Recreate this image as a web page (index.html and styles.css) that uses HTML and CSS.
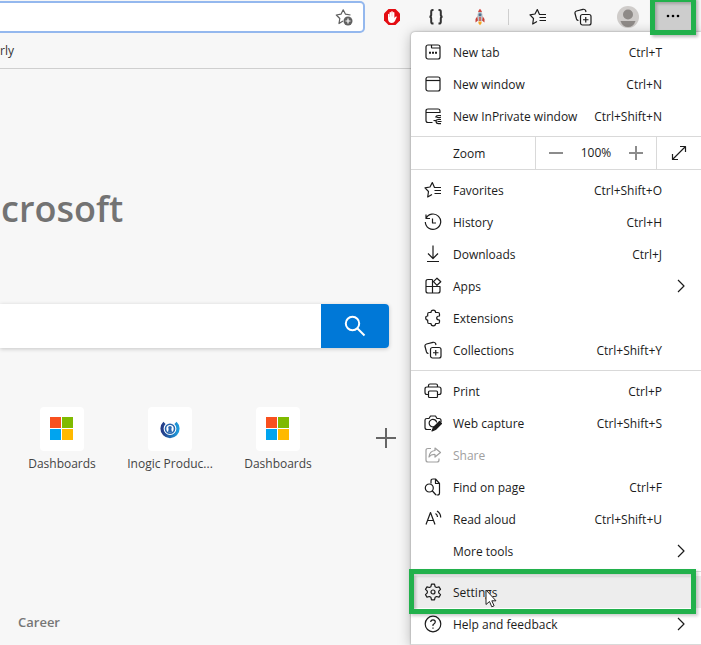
FILE: index.html
```html
<!DOCTYPE html>
<html lang="en">
<head>
<meta charset="utf-8">
<title>New tab</title>
<link rel="stylesheet" href="styles.css">
</head>
<body>
<svg class="defs" aria-hidden="true">
  <symbol id="favorites" viewBox="0 0 18 18"><path d="M13 6.500H10.500L8.300 1.500 6 6 1 6.800 4.500 10.500 3.700 16 8 13.500M11.500 6.500H17M10.500 9.500H17M10.500 12.500H17"/></symbol>
  <symbol id="collections" viewBox="0 0 18 18"><rect x="6.500" y="6.500" width="10.500" height="10.500" rx="2"/><path d="M11.750 9v5.500M9 11.750h5.500M4.500 12.500Q3 12.500 2.500 11L1 5.500Q.6 3.600 2.500 3L9 1.300Q11 1 11.600 2.500L12 4"/></symbol>
  <symbol id="chevron" viewBox="0 0 18 18"><path d="M6 3l6 6-6 6"/></symbol>
  <symbol id="windows" viewBox="0 0 23 23"><path class="red" d="M0 0h11v11H0z"/><path class="green" d="M12 0h11v11H12z"/><path class="blue" d="M0 12h11v11H0z"/><path class="yellow" d="M12 12h11v11H12z"/></symbol>
</svg>

<header class="toolbar">
  <div class="address">
    <input type="text" aria-label="Address">
    <button class="star" aria-label="Add to favorites"><svg class="icon" viewBox="0 0 18 18"><path d="M8 13L4 15.500 4.800 10.500 1.300 7 6 6.200 8.200 1.800 10.500 6.200 15.500 7"/><circle class="badge" cx="13" cy="13" r="4.500"/><path class="badge-plus" d="M13 10.500v5M10.500 13h5"/></svg></button>
  </div>
  <nav class="tools" aria-label="Browser tools">
    <button aria-label="Ad blocker"><svg class="solid" viewBox="0 0 18 18"><path fill="#e40d13" d="M5.500 1h7L17 5.500v7L12.500 17h-7L1 12.500v-7z"/><path fill="#fff" d="M5 6.200q.7-.7 1.300 0V9h.2V4.500q.8-.9 1.600 0V8.500h.1V3.600q.8-.8 1.600 0V8.500h.1V4.500q.8-.8 1.500 0V10l1-1.200q.8-.8 1.500 0L12 13q-1 2-3.200 2Q5.300 15 5 11z"/></svg></button>
    <button aria-label="JSON viewer"><svg class="braces" viewBox="0 0 18 18"><path d="M6.500 2H5.700Q4.200 2 4.200 3.800V6.800Q4.200 8.600 2.500 8.700 4.200 8.800 4.200 10.600V13.700Q4.200 15.500 5.700 15.500H6.500M11.500 2h.8Q13.800 2 13.800 3.800V6.800Q13.800 8.600 15.500 8.700 13.800 8.800 13.800 10.600V13.700Q13.800 15.500 12.300 15.500H11.500"/></svg></button>
    <button aria-label="Rocket"><svg class="solid" viewBox="0 0 18 18"><path fill="#c94138" d="M6.500 8L4.500 11v3.500L7 12.500zM11.500 8l2 3v3.500L11 12.500z"/><path fill="#b9c2c9" d="M9 2Q12 5 11.500 9L11 13H7L6.500 9Q6 5 9 2z"/><path fill="#d14a42" d="M9 .8Q10.400 2.200 11 4H7Q7.600 2.200 9 .8zM8.300 9h1.400v4H8.300z"/><circle fill="#4d6f8e" cx="9" cy="6.800" r="1.500"/><path fill="#f6a623" d="M7.300 13.500h3.400Q11 15.500 9 17.300 7 15.500 7.300 13.500z"/></svg></button>
    <span class="divider"></span>
    <button aria-label="Favorites"><svg class="icon"><use href="#favorites"/></svg></button>
    <button aria-label="Collections"><svg class="icon"><use href="#collections"/></svg></button>
    <button aria-label="Profile"><svg class="avatar" viewBox="0 0 22 22"><circle fill="#cfccca" cx="11" cy="11" r="11"/><circle fill="#8e8a87" cx="11" cy="8.500" r="5"/><path fill="#8e8a87" d="M3.500 15h15Q16.500 21 11 21T3.500 15z"/></svg></button>
    <button class="more" aria-label="Settings and more"><svg class="dots" viewBox="0 0 18 18"><circle cx="4" cy="9" r="1.300"/><circle cx="9" cy="9" r="1.300"/><circle cx="14" cy="9" r="1.300"/></svg></button>
  </nav>
</header>
<div class="bookmarks"><a href="#">rly</a></div>

<main class="page">
  <h1 class="brand">crosoft</h1>
  <form class="search">
    <input type="text" aria-label="Search the web">
    <button type="button" aria-label="Search"><svg viewBox="0 0 22 22"><circle cx="8.500" cy="8.500" r="6.700"/><path d="M13.500 13.500L20.500 20.500"/></svg></button>
  </form>
  <div class="tiles">
    <a class="tile" href="#"><span class="thumb"><svg class="win"><use href="#windows"/></svg></span>Dashboards</a>
    <a class="tile" href="#"><span class="thumb"><svg class="inogic" viewBox="0 0 20 20"><defs><linearGradient id="ring"><stop offset="0" stop-color="#243a86"/><stop offset="1" stop-color="#1e9bdc"/></linearGradient></defs><path fill="none" stroke="url(#ring)" stroke-width="3.200" d="M4.500 3.800A8 8 0 1 0 15.500 3.800"/><circle fill="#fff" stroke="#2765ae" stroke-width="1.600" cx="10" cy="9.700" r="4.500"/><circle fill="#2b67b0" cx="10" cy="8.800" r="1.800"/><path fill="#2b67b0" d="M8.700 10h2.600l.8 3.500H7.900z"/></svg></span>Inogic Produc...</a>
    <a class="tile" href="#"><span class="thumb"><svg class="win"><use href="#windows"/></svg></span>Dashboards</a>
    <button class="add" aria-label="Add site"><svg viewBox="0 0 20 20"><path d="M10 0v20M0 10h20"/></svg></button>
  </div>
  <h2 class="topic">Career</h2>
</main>

<div class="menu" role="menu">
  <div class="group">
    <button class="item" role="menuitem"><svg class="icon" viewBox="0 0 18 18"><rect x="2" y="2" width="14" height="14" rx="2"/><path d="M7.500 2v2.500q0 .5.500.500H16"/><path class="dotted" d="M5 9.800h2M8 9.800h2M11 9.800h2"/></svg><span>New tab</span><kbd>Ctrl+T</kbd></button>
    <button class="item" role="menuitem"><svg class="icon" viewBox="0 0 18 18"><rect x="2" y="2" width="14" height="14" rx="2"/><path d="M2 5.500h14"/></svg><span>New window</span><kbd>Ctrl+N</kbd></button>
    <button class="item" role="menuitem"><svg class="icon" viewBox="0 0 18 18"><path d="M8.500 15.500H4q-2 0-2-2V4q0-2 2-2h10q2 0 2 2v2M2 5.500h14M17 8.500h-2.500q-2.500 0-3 1.800M12 9.800q3 1.700 4.800.2M17 12.500h-2.500q-1.500 0-2.500 1M9.500 13.500l2.500.2q0 3 2.500 3H17M13.500 14.500h4"/></svg><span>New InPrivate window</span><kbd>Ctrl+Shift+N</kbd></button>
  </div>
  <div class="zoom">
    <span class="zoom-label">Zoom</span>
    <button aria-label="Zoom out"><svg class="sign" viewBox="0 0 14 14"><path d="M0 7h14"/></svg></button>
    <output>100%</output>
    <button aria-label="Zoom in"><svg class="sign" viewBox="0 0 14 14"><path d="M0 7h14M7 0v14"/></svg></button>
    <button class="full" aria-label="Full screen"><svg class="icon" viewBox="0 0 18 18"><path d="M2.500 15.500l13-13M10 2.500h5.500V8M2.500 10v5.500H8"/></svg></button>
  </div>
  <div class="group">
    <button class="item" role="menuitem"><svg class="icon"><use href="#favorites"/></svg><span>Favorites</span><kbd>Ctrl+Shift+O</kbd></button>
    <button class="item" role="menuitem"><svg class="icon" viewBox="0 0 18 18"><path d="M2 1.500v4h4M2 5.500A7.700 7.700 0 1 1 1.300 9M8.500 5.500V10H12"/></svg><span>History</span><kbd>Ctrl+H</kbd></button>
    <button class="item" role="menuitem"><svg class="icon" viewBox="0 0 18 18"><path d="M9 .5V13.500M4 8.500l5 5 5-5M3 16.500h12"/></svg><span>Downloads</span><kbd>Ctrl+J</kbd></button>
    <button class="item" role="menuitem"><svg class="icon" viewBox="0 0 18 18"><path d="M8.500 2.500H4q-2 0-2 2V14q0 2 2 2h10q2 0 2-2V9.500h-14M8.500 2.500V16M13 1.200L16.800 4.700 13 8.300 9.500 4.700z"/></svg><span>Apps</span><svg class="icon chevron"><use href="#chevron"/></svg></button>
    <button class="item" role="menuitem"><svg class="icon" viewBox="0 0 18 18"><path d="M5 3.500H7Q7 1.200 9.300 1.200T11.600 3.500H14q1.500 0 1.500 1.500V7Q12.700 7 12.700 9t2.800 2v2q0 1.500-1.500 1.500H11.600Q11.600 16.800 9.300 16.800T7 14.500H5q-1.300 0-1.300-1.500V11Q1.700 11 1.700 9T3.700 7V5q0-1.500 1.300-1.500z"/></svg><span>Extensions</span></button>
    <button class="item" role="menuitem"><svg class="icon"><use href="#collections"/></svg><span>Collections</span><kbd>Ctrl+Shift+Y</kbd></button>
  </div>
  <div class="group">
    <button class="item" role="menuitem"><svg class="icon" viewBox="0 0 18 18"><path d="M4.500 12.500H3q-2 0-2-2V7q0-2 2-2h12q2 0 2 2v3.500q0 2-2 2h-1.500M4.500 5V3.500q0-1.500 1.500-1.500h6q1.500 0 1.500 1.500V5"/><rect x="4.500" y="9" width="9" height="6.500" rx="1"/></svg><span>Print</span><kbd>Ctrl+P</kbd></button>
    <button class="item" role="menuitem"><svg class="icon" viewBox="0 0 18 18"><path d="M7 15.500H3q-2 0-2-2V6q0-1.500 2-1.500H5L6.500 2h5L13 4.500h2q2 0 2 2V8M11 12.300A3.800 3.800 0 1 1 12.700 8.500"/><path class="pen" d="M8 17l1.500-3.500L15.500 7.500 17.500 9.500 11.500 15.500z"/></svg><span>Web capture</span><kbd>Ctrl+Shift+S</kbd></button>
    <button class="item" role="menuitem" disabled><svg class="icon" viewBox="0 0 18 18"><path d="M7 2.500H4q-2 0-2 2V14q0 2 2 2h9q2 0 2-2V12.500M11 2l5.500 4.500L11 11V8.500q-4-.3-6 2.500.5-6 6-6.500z"/></svg><span>Share</span></button>
    <button class="item" role="menuitem"><svg class="icon" viewBox="0 0 18 18"><path d="M7 5.500V3q0-2 2-2h2.500l4 4.500V15q0 2-2 2h-1M11.500 1v4.500h4M8 12.500l4 4.500"/><circle cx="5.300" cy="10" r="4"/></svg><span>Find on page</span><kbd>Ctrl+F</kbd></button>
    <button class="item" role="menuitem"><svg class="icon" viewBox="0 0 18 18"><path d="M2 14.500L6.500 2.500 11 14.500M3.500 10.500h6M11.500 3.500q2 1.300 2 3.500M13 1Q16.700 3.300 16.700 7.500"/></svg><span>Read aloud</span><kbd>Ctrl+Shift+U</kbd></button>
    <button class="item" role="menuitem"><span class="icon"></span><span>More tools</span><svg class="icon chevron"><use href="#chevron"/></svg></button>
  </div>
  <div class="group">
    <button class="item current" role="menuitem"><svg class="icon" viewBox="0 0 18 18"><circle cx="9" cy="9" r="2"/><path d="M7.500 1.200h3L11.100 3.700 12.600 4.500 15 3.800 16.500 6.400 14.700 8.100V9.900L16.500 11.600 15 14.200 12.600 13.500 11.100 14.300 10.500 16.800H7.500L6.900 14.300 5.400 13.500 3 14.200 1.500 11.600 3.300 9.900V8.100L1.500 6.400 3 3.800 5.400 4.500 6.900 3.700z"/></svg><span>Settings</span>
      <svg class="pointer" viewBox="0 0 12 19"><path d="M1 1v14.500l3.500-3 2.300 5.300 2.300-1-2.300-5H11z"/></svg></button>
    <button class="item" role="menuitem"><svg class="icon" viewBox="0 0 18 18"><circle cx="9" cy="9" r="7.800"/><path d="M6.700 7Q6.700 4.800 9 4.800T11.300 7Q11.300 8.200 9 9.800V11M9 12.500v1.300"/></svg><span>Help and feedback</span><svg class="icon chevron"><use href="#chevron"/></svg></button>
  </div>
</div>
</body>
</html>
```
FILE: styles.css
```css
* { box-sizing: border-box; }
body {
  position: relative;
  margin: 0;
  min-height: 100vh;
  overflow: hidden;
  background: #f7f7f7;
  color: #1b1b1b;
  font: 12px/16px "Open Sans", "Noto Sans", sans-serif;
}
button { padding: 0; border: 0; background: none; color: inherit; font: inherit; }
input { min-width: 0; border: 0; outline: 0; background: none; font: inherit; }
a { color: inherit; text-decoration: none; }
svg { display: block; flex: none; }
.defs { position: absolute; width: 0; height: 0; }
.icon { width: 18px; height: 18px; fill: none; stroke: currentColor; stroke-width: 1.2; stroke-linejoin: round; }
.solid, .braces, .dots { width: 18px; height: 18px; }

.toolbar { display: flex; height: 34px; }
.address {
  display: flex;
  flex: 1;
  align-items: center;
  height: 32px;
  margin-top: 1px;
  padding-right: 10px;
  background: #fff;
  border: 2px solid #94b8ee;
  border-left: 0;
  border-radius: 0 5px 5px 0;
}
.address input { flex: 1; }
.star { color: #5f5f5f; }
.badge { fill: #616161; stroke: none; }
.badge-plus { stroke: #fff; }
.tools { display: flex; align-items: center; padding: 0 5px; }
.tools button { display: grid; place-items: center; width: 45px; height: 34px; }
.tools button:nth-child(-n+3) { width: 44px; }
.braces { fill: none; stroke: #333; stroke-width: 2; }
.divider { width: 1px; height: 16px; margin: 0 6px; background: #cfcfcf; }
.avatar { width: 22px; height: 22px; }
.tools .more {
  z-index: 2;
  width: 46px;
  height: 38px;
  margin-top: -2px;
  background: #cdcdcd;
  border: 5px solid #22b14c;
  box-shadow: 2px 2px 3px #0004, inset 2px 2px 3px #0003;
}

.bookmarks { height: 35px; padding-top: 9px; border-bottom: 1px solid #cfcfcf; color: #333; }

.page { display: flex; flex-direction: column; align-items: flex-start; color: #444; }
.brand { margin: 115px 0 0 1px; color: #737373; font: 600 36px/50px "Open Sans", sans-serif; }
.search { display: flex; width: calc(100% - 312px); height: 44px; margin: 70px 0 59px; background: #fff; border-radius: 0 4px 4px 0; box-shadow: 0 1px 4px #0003; }
.search input { flex: 1; }
.search button { display: grid; place-items: center; width: 68px; background: #0078d7; border-radius: 0 4px 4px 0; }
.search svg { width: 22px; height: 22px; fill: none; stroke: #fff; stroke-width: 2; }
.tiles { display: grid; grid-template-columns: repeat(4, 108px); margin-left: 8px; }
.tile { display: flex; flex-direction: column; align-items: center; gap: 5px; }
.thumb { display: grid; place-items: center; width: 44px; height: 44px; padding: 0 1px 1px 0; background: #fff; border-radius: 4px; }
.win { width: 23px; height: 23px; }
.red { fill: #f8501f; }
.green { fill: #7fba00; }
.blue { fill: #00a4ef; }
.yellow { fill: #ffb900; }
.inogic { width: 20px; height: 20px; }
.add { display: grid; place-items: center; height: 62px; }
.add svg { width: 20px; height: 20px; stroke: #666; stroke-width: 2; }
.topic { margin: 141px 0 0 18px; color: #767676; font: 600 13px/18px "Open Sans", sans-serif; }

.menu {
  position: absolute;
  top: 32px;
  right: 0;
  width: 290px;
  background: #fff;
  border-radius: 4px 0 0 0;
  box-shadow: 0 0 2px #0006, 0 2px 14px #0004;
}
.group { padding: 4px 0; border-bottom: 1px solid #d9d9d9; }
.item { position: relative; display: flex; align-items: center; gap: 11px; width: 100%; height: 32px; padding: 0 39px 0 13px; text-align: left; }
.item span, .item kbd { padding-top: 2px; font: inherit; }
.item kbd { margin-left: auto; }
.item:disabled { color: #a0a0a0; }
.item .chevron { margin: 0 -28px 0 auto; }
.dotted { stroke-width: 2; }
.pen { fill: currentColor; }
.zoom { display: flex; height: 33px; border-bottom: 1px solid #d9d9d9; }
.zoom-label { flex: 1; padding: 9px 0 0 42px; border-right: 1px solid #d9d9d9; }
.zoom button, .zoom output { display: grid; place-items: center; width: 40px; }
.sign { width: 14px; height: 14px; stroke: #8c8c8c; stroke-width: 2; }
.zoom .full { width: 45px; border-left: 1px solid #d9d9d9; }
.current { background: #ededed; }
.current::after {
  content: "";
  position: absolute;
  inset: -7px 5px -6px -2px;
  border: 5px solid #22b14c;
  box-shadow: 2px 2px 3px #0003, inset 2px 2px 3px #0003;
}
.pointer { position: absolute; left: 74px; top: 13px; width: 12px; height: 19px; fill: #fff; stroke: #222; }
```
